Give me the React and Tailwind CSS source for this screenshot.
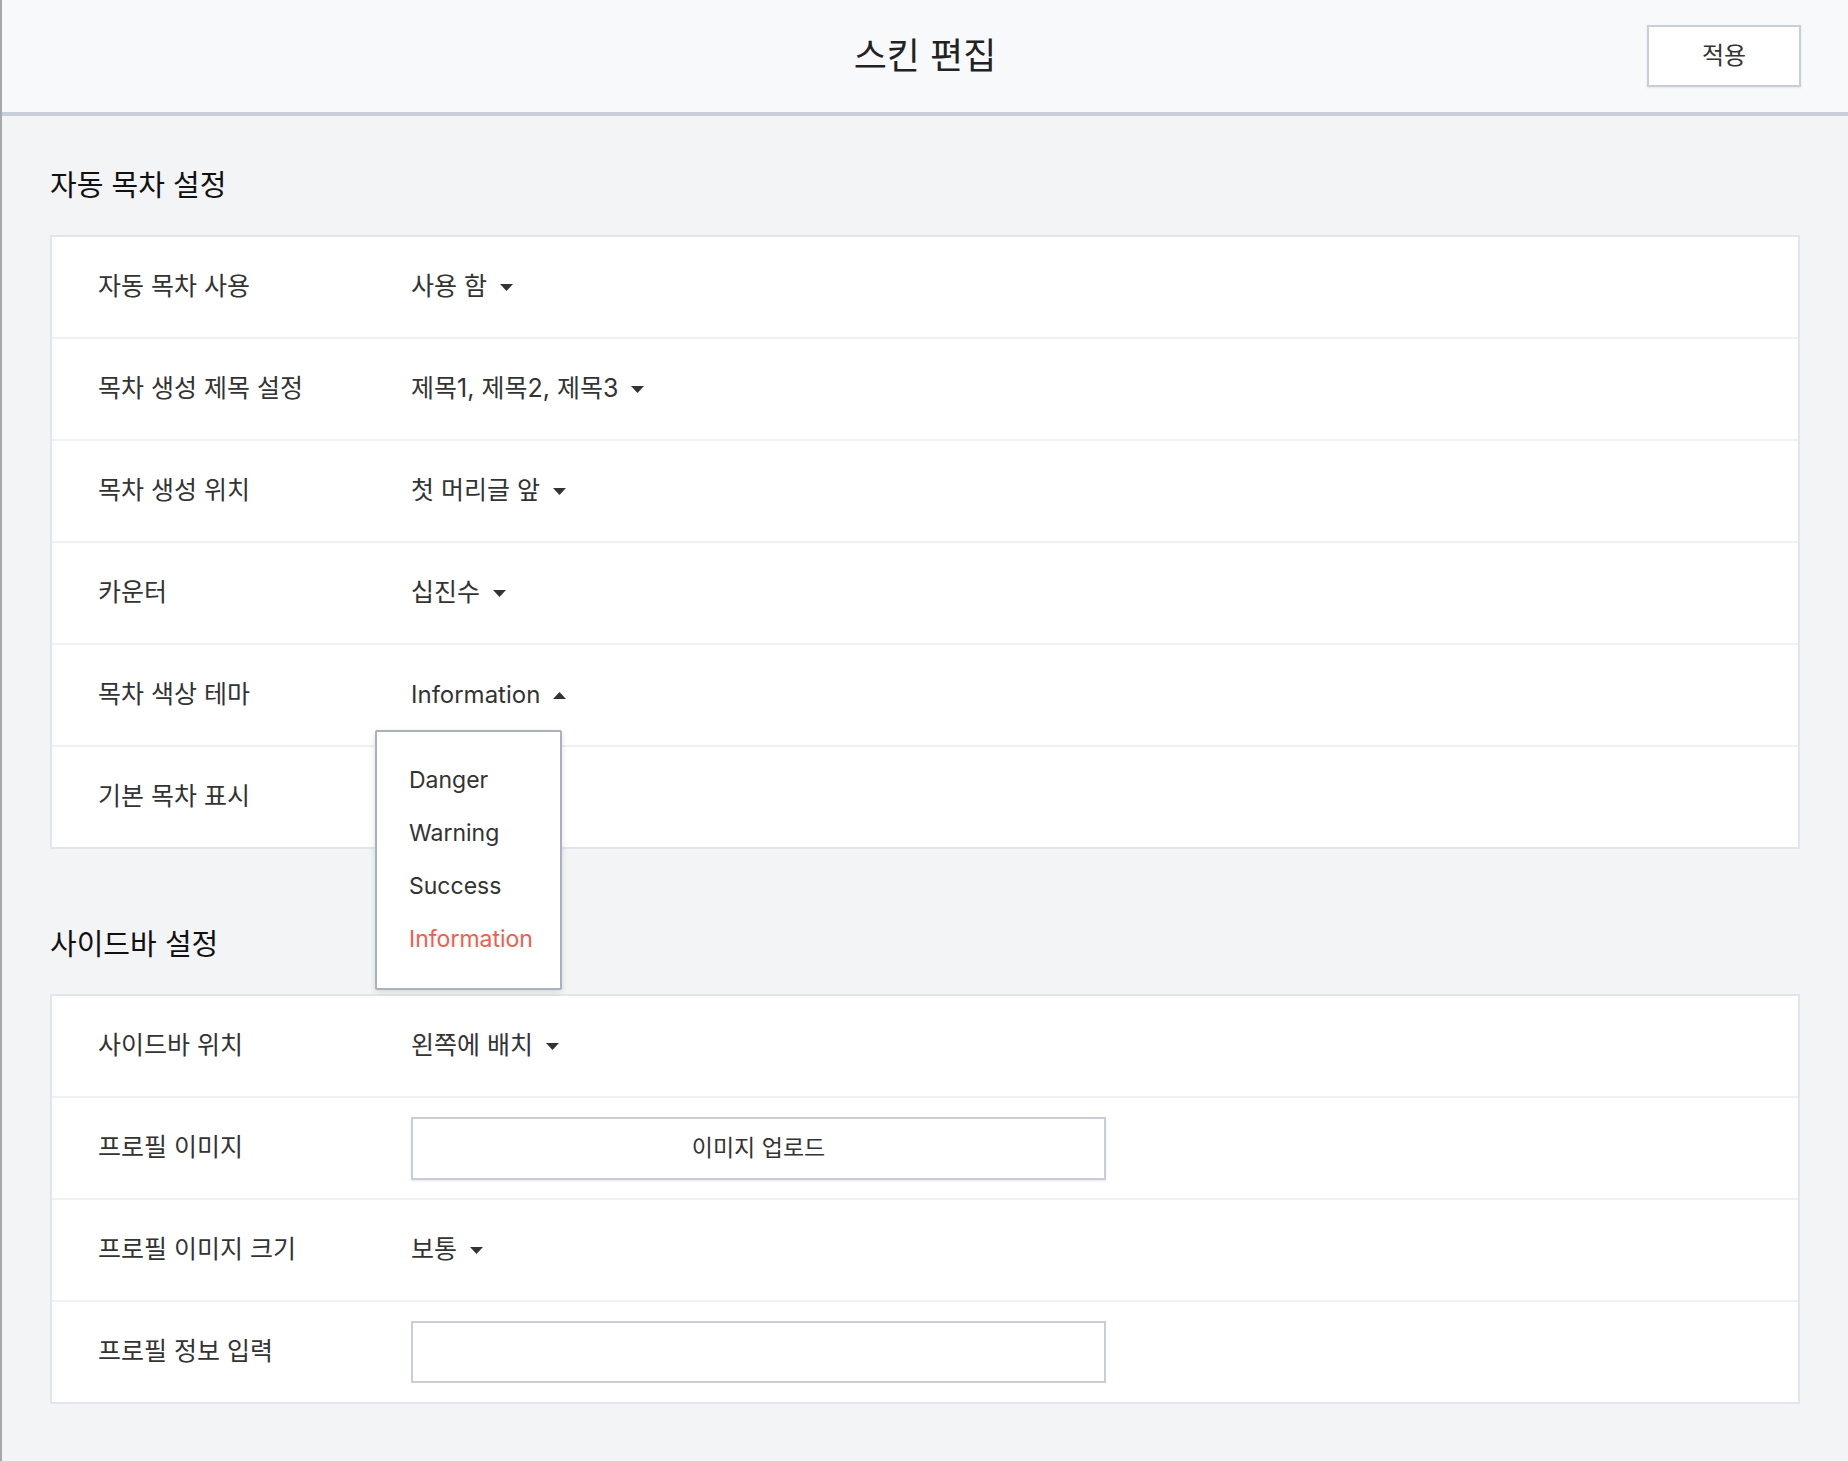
import React from "react";

const font = { fontFamily: '"Inter", "Noto Sans CJK KR", sans-serif' };

function Caret({ up = false }) {
  return (
    <svg width="13" height="7" viewBox="0 0 13 7" className="shrink-0">
      {up ? <path d="M0 7 L6.5 0 L13 7 Z" fill="#333" /> : <path d="M0 0 L13 0 L6.5 7 Z" fill="#333" />}
    </svg>
  );
}

function Select({ value, up = false, latin = false, children }) {
  return (
    <div className="relative flex h-[34px] items-center gap-[13px]">
      <span className={latin ? "text-[24px]" : ""}>{value}</span>
      <Caret up={up} />
      {children}
    </div>
  );
}

function Row({ label, children, last = false }) {
  return (
    <div className={"flex items-center pl-[46px] " + (last ? "h-[100px]" : "h-[102px] border-b-2 border-[#f0f1f4]")}>
      <div className="w-[313px] shrink-0">{label}</div>
      <div className="flex-1">{children}</div>
    </div>
  );
}

function Menu() {
  const items = ["Danger", "Warning", "Success", "Information"];
  return (
    <div className="absolute left-[-36px] top-[52px] z-10 w-[187px] rounded-[2px] border-2 border-[#aab0bc] bg-white py-[22px] pl-[32px] shadow-[0_2px_6px_rgba(0,0,0,0.12)]">
      {items.map((it) => (
        <div
          key={it}
          className={"text-[23px] leading-[53px] " + (it === "Information" ? "text-[#f25c4d]" : "text-[#333]")}
        >
          {it}
        </div>
      ))}
    </div>
  );
}

export default function App() {
  return (
    <div style={font} className="min-h-[1461px] border-l-2 border-[#a8a8a8] bg-[#f3f4f6] text-[#333]">
      <header className="grid h-[116px] grid-cols-[1fr_auto_1fr] items-center border-b-4 border-[#c8ced9] bg-[#f8f9fb]">
        <div />
        <h1 className="text-[36px] leading-none text-[#222]">스킨 편집</h1>
        <div className="flex justify-end pr-[47px]">
          <button className="h-[62px] w-[154px] border-2 border-[#c8ced8] bg-white text-[24px] text-[#333] shadow-[0_1px_2px_rgba(0,0,0,0.08)]">
            적용
          </button>
        </div>
      </header>

      <main className="px-[48px] pb-[56px]">
        <h2 className="mt-[52px] h-[36px] text-[29px] leading-[36px] text-[#111]">자동 목차 설정</h2>
        <section className="mt-[31px] border-2 border-[#e2e5ec] bg-white text-[25px]">
          <Row label="자동 목차 사용">
            <Select value="사용 함" />
          </Row>
          <Row label="목차 생성 제목 설정">
            <Select value="제목1, 제목2, 제목3" />
          </Row>
          <Row label="목차 생성 위치">
            <Select value="첫 머리글 앞" />
          </Row>
          <Row label="카운터">
            <Select value="십진수" />
          </Row>
          <Row label="목차 색상 테마">
            <Select value="Information" up latin>
              <Menu />
            </Select>
          </Row>
          <Row label="기본 목차 표시" last>
            <div />
          </Row>
        </section>

        <h2 className="mt-[78px] h-[36px] text-[29px] leading-[36px] text-[#111]">사이드바 설정</h2>
        <section className="mt-[31px] border-2 border-[#e2e5ec] bg-white text-[25px]">
          <Row label="사이드바 위치">
            <Select value="왼쪽에 배치" />
          </Row>
          <Row label="프로필 이미지">
            <button className="h-[63px] w-[695px] border-2 border-[#c9cdd8] bg-white text-[23px] text-[#333] shadow-[0_1px_2px_rgba(0,0,0,0.1)]">
              이미지 업로드
            </button>
          </Row>
          <Row label="프로필 이미지 크기">
            <Select value="보통" />
          </Row>
          <Row label="프로필 정보 입력" last>
            <input className="h-[62px] w-[695px] border-2 border-[#c9cdd8] bg-white px-3 text-[22px] outline-none" />
          </Row>
        </section>
      </main>
    </div>
  );
}
